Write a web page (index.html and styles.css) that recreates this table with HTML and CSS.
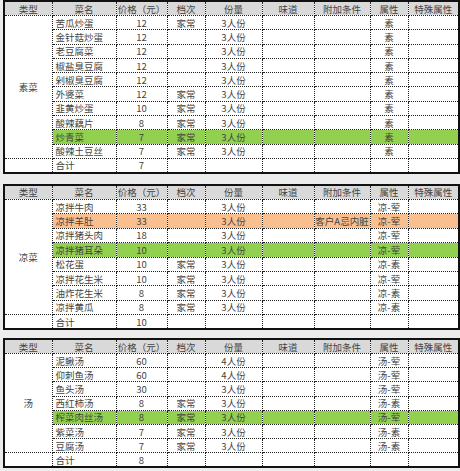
FILE: index.html
```html
<!DOCTYPE html>
<html lang="zh">
<head>
<meta charset="utf-8">
<link rel="stylesheet" href="styles.css">
</head>
<body>
<div class="page">
<table class="menu t1">
<colgroup><col class="c1"><col class="c2"><col class="c3"><col class="c4"><col class="c5"><col class="c6"><col class="c7"><col class="c8"><col class="c9"></colgroup>
<tr class="head"><td>类型</td><td>菜名</td><td>价格（元）</td><td>档次</td><td>份量</td><td>味道</td><td>附加条件</td><td>属性</td><td>特殊属性</td></tr>
<tr><td class="type" rowspan="10">素菜</td><td class="name">苦瓜炒蛋</td><td>12</td><td>家常</td><td>3人份</td><td></td><td></td><td>素</td><td></td></tr>
<tr><td class="name">金针菇炒蛋</td><td>12</td><td></td><td>3人份</td><td></td><td></td><td>素</td><td></td></tr>
<tr><td class="name">老豆腐菜</td><td>12</td><td></td><td>3人份</td><td></td><td></td><td>素</td><td></td></tr>
<tr><td class="name">椒盐臭豆腐</td><td>12</td><td></td><td>3人份</td><td></td><td></td><td>素</td><td></td></tr>
<tr><td class="name">剁椒臭豆腐</td><td>12</td><td></td><td>3人份</td><td></td><td></td><td>素</td><td></td></tr>
<tr><td class="name">外婆菜</td><td>12</td><td>家常</td><td>3人份</td><td></td><td></td><td>素</td><td></td></tr>
<tr><td class="name">韭黄炒蛋</td><td>10</td><td>家常</td><td>3人份</td><td></td><td></td><td>素</td><td></td></tr>
<tr><td class="name">酸辣藕片</td><td>8</td><td>家常</td><td>3人份</td><td></td><td></td><td>素</td><td></td></tr>
<tr class="green"><td class="name">炒青菜</td><td>7</td><td>家常</td><td>3人份</td><td></td><td></td><td>素</td><td></td></tr>
<tr><td class="name">酸辣土豆丝</td><td>7</td><td>家常</td><td>3人份</td><td></td><td></td><td>素</td><td></td></tr>
<tr><td></td><td class="name">合计</td><td>7</td><td></td><td></td><td></td><td></td><td></td><td></td></tr>
</table>

<table class="menu t2">
<colgroup><col class="c1"><col class="c2"><col class="c3"><col class="c4"><col class="c5"><col class="c6"><col class="c7"><col class="c8"><col class="c9"></colgroup>
<tr class="head"><td>类型</td><td>菜名</td><td>价格（元）</td><td>档次</td><td>份量</td><td>味道</td><td>附加条件</td><td>属性</td><td>特殊属性</td></tr>
<tr><td class="type" rowspan="8">凉菜</td><td class="name">凉拌牛肉</td><td>33</td><td></td><td>3人份</td><td></td><td></td><td>凉-荤</td><td></td></tr>
<tr class="orange"><td class="name">凉拌羊肚</td><td>33</td><td></td><td>3人份</td><td></td><td>客户A忌内脏</td><td>凉-荤</td><td></td></tr>
<tr><td class="name">凉拌猪头肉</td><td>18</td><td></td><td>3人份</td><td></td><td></td><td>凉-荤</td><td></td></tr>
<tr class="green"><td class="name">凉拌猪耳朵</td><td>10</td><td></td><td>3人份</td><td></td><td></td><td>凉-荤</td><td></td></tr>
<tr><td class="name">松花蛋</td><td>10</td><td>家常</td><td>3人份</td><td></td><td></td><td>凉-素</td><td></td></tr>
<tr><td class="name">凉拌花生米</td><td>10</td><td>家常</td><td>3人份</td><td></td><td></td><td>凉-荤</td><td></td></tr>
<tr><td class="name">油炸花生米</td><td>8</td><td>家常</td><td>3人份</td><td></td><td></td><td>凉-素</td><td></td></tr>
<tr><td class="name">凉拌黄瓜</td><td>8</td><td>家常</td><td>3人份</td><td></td><td></td><td>凉-素</td><td></td></tr>
<tr><td></td><td class="name">合计</td><td>10</td><td></td><td></td><td></td><td></td><td></td><td></td></tr>
</table>

<table class="menu t3">
<colgroup><col class="c1"><col class="c2"><col class="c3"><col class="c4"><col class="c5"><col class="c6"><col class="c7"><col class="c8"><col class="c9"></colgroup>
<tr class="head"><td>类型</td><td>菜名</td><td>价格（元）</td><td>档次</td><td>份量</td><td>味道</td><td>附加条件</td><td>属性</td><td>特殊属性</td></tr>
<tr><td class="type" rowspan="7">汤</td><td class="name">泥鳅汤</td><td>60</td><td></td><td>4人份</td><td></td><td></td><td>汤-荤</td><td></td></tr>
<tr><td class="name">仰刺鱼汤</td><td>60</td><td></td><td>4人份</td><td></td><td></td><td>汤-荤</td><td></td></tr>
<tr><td class="name">鱼头汤</td><td>30</td><td></td><td>3人份</td><td></td><td></td><td>汤-荤</td><td></td></tr>
<tr><td class="name">西红柿汤</td><td>8</td><td>家常</td><td>3人份</td><td></td><td></td><td>汤-素</td><td></td></tr>
<tr class="green"><td class="name">榨菜肉丝汤</td><td>8</td><td>家常</td><td>3人份</td><td></td><td></td><td>汤-荤</td><td></td></tr>
<tr><td class="name">紫菜汤</td><td>7</td><td>家常</td><td>3人份</td><td></td><td></td><td>汤-素</td><td></td></tr>
<tr><td class="name">豆腐汤</td><td>7</td><td>家常</td><td>3人份</td><td></td><td></td><td>汤-素</td><td></td></tr>
<tr><td></td><td class="name">合计</td><td>8</td><td></td><td></td><td></td><td></td><td></td><td></td></tr>
</table>
</div>
</body>
</html>
```

FILE: styles.css
```css
html, body {
  margin: 0;
  padding: 0;
  background: #ececec;
}
.page {
  width: 460px;
  height: 471px;
  padding: 0 0 0 3px;
  box-sizing: border-box;
  display: flex;
  flex-direction: column;
}
.menu {
  border-collapse: collapse;
  table-layout: fixed;
  width: 455px;
  background: #ffffff;
  border: 2px solid #111111;
  font-family: "Noto Sans CJK SC", "Noto Sans", sans-serif;
  font-size: 9.5px;
  color: #444444;
}
.t2 { margin-top: 10px; }
.t3 { margin-top: 8px; }
.c1 { width: 48px; }
.c2 { width: 64px; }
.c3 { width: 51px; }
.c4 { width: 38px; }
.c5 { width: 57px; }
.c6 { width: 52px; }
.c7 { width: 56px; }
.c8 { width: 38px; }
.c9 { width: 51px; }
.menu td {
  border: 1px dotted #222222;
  padding: 0;
  height: 13px;
  line-height: 12px;
  text-align: center;
  white-space: nowrap;
  overflow: hidden;
}
.t1 tr { height: 14.3px; }
.t2 tr { height: 14.4px; }
.t3 tr { height: 14.2px; }
.menu td.name {
  text-align: left;
  padding-left: 3px;
}
.menu td.type {
  vertical-align: middle;
}
.head td {
  background: #d9d9d9;
}
.green td {
  background: #92d050;
}
.orange td {
  background: #fabf8f;
}
```
